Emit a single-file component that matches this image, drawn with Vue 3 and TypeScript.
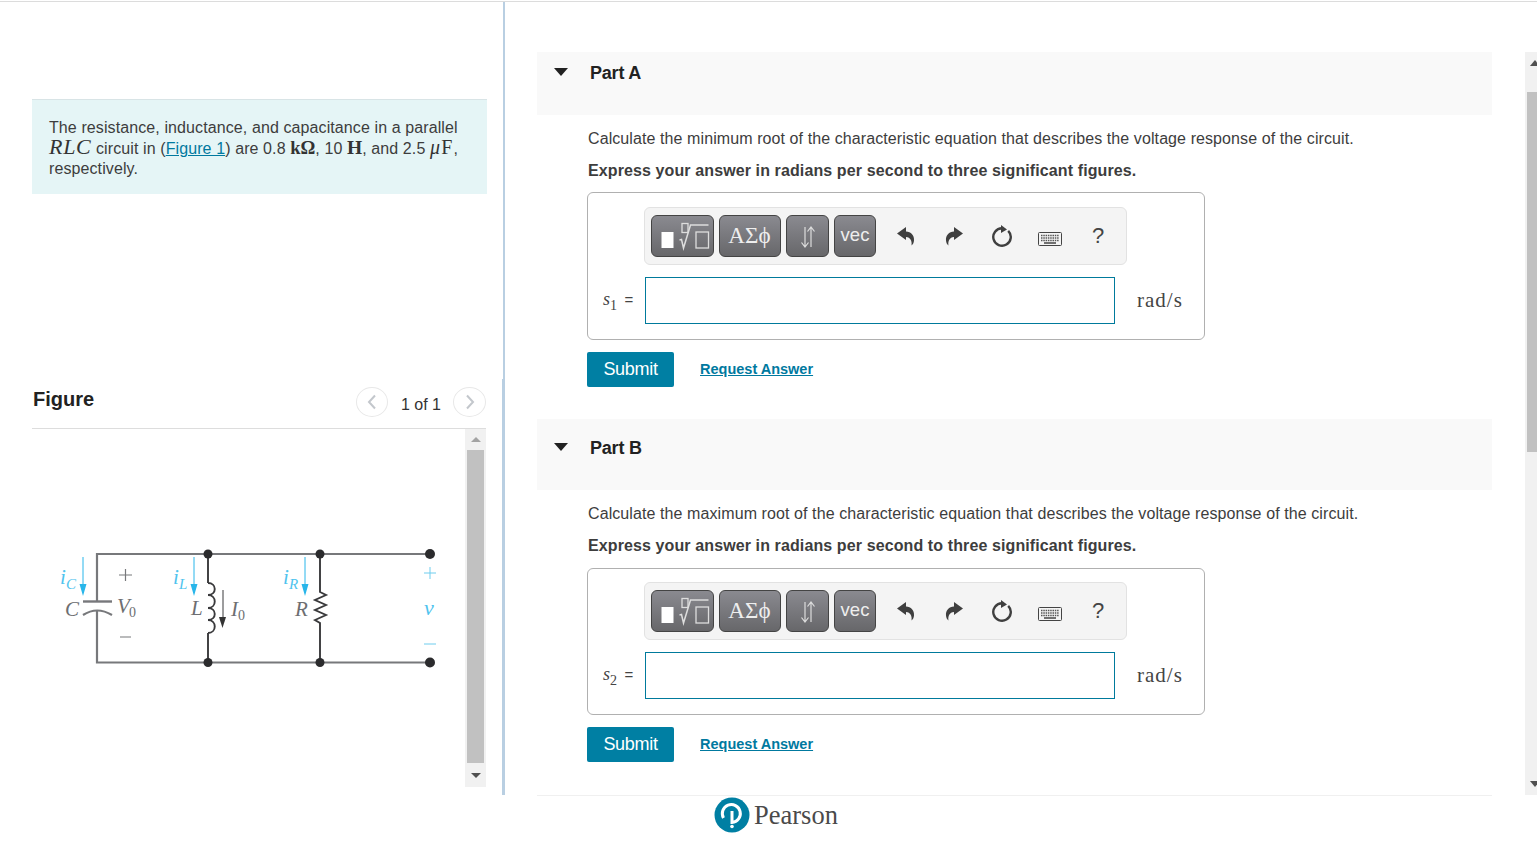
<script setup lang="ts">
interface Part { id: string; title: string; question: string; symbol: string; sub: string; tall: boolean }
const parts: Part[] = [
  { id: 'a', title: 'Part A', question: 'Calculate the minimum root of the characteristic equation that describes the voltage response of the circuit.', symbol: 's', sub: '1', tall: false },
  { id: 'b', title: 'Part B', question: 'Calculate the maximum root of the characteristic equation that describes the voltage response of the circuit.', symbol: 's', sub: '2', tall: true },
]
</script>

<template>
  <div class="page">
    <div class="main">
      <aside class="left">
        <div class="intro">
          The resistance, inductance, and capacitance in a parallel<br>
          <i class="m mi">RLC</i> circuit in (<a class="link" href="#">Figure 1</a>) are 0.8 <b class="m mk">kΩ</b>, 10 <b class="m mh">H</b>, and 2.5 <span class="m mu"><i>μ</i>F</span>,<br>
          respectively.
        </div>
        <div class="fig-head">
          <h2>Figure</h2>
          <div class="pager">
            <span class="round"><svg width="10" height="16" viewBox="0 0 10 16"><path d="M8 1.500 2 8l6 6.500" fill="none" stroke="#c3c7cc" stroke-width="2"/></svg></span>
            <span class="count">1 of 1</span>
            <span class="round"><svg width="10" height="16" viewBox="0 0 10 16"><path d="M2 1.500 8 8l-6 6.500" fill="none" stroke="#c3c7cc" stroke-width="2"/></svg></span>
          </div>
        </div>
        <div class="fig-body">
          <svg class="circuit" width="433" height="358" viewBox="32 429 433 358">
            <g fill="none" stroke="#77787b" stroke-width="2.200">
              <path d="M208 554H97V601M97 611V662.500H208"/>
              <path d="M208 554H430M208 662.500H430" />
              <path d="M83 601.500H112" stroke-width="2.400"/>
              <path d="M83 615Q97 606 112 615" />
              <path d="M119 575H132M125.500 569V581M120 637H131" stroke-width="1.200"/>
            </g>
            <g fill="none" stroke="#3a3a3c" stroke-width="1.900">
              <path d="M208 554V583M208 633V662"/>
              <path d="M208 583c9 0 9 12 0 12c9 0 9 13 0 13c9 0 9 12 0 12c9 0 9 13 0 13" />
              <path d="M320 554V592L326 595 315 600 326 605 315 610 326 615 315 620 320 623V662"/>
              <path d="M223 590V618" stroke-width="1"/>
            </g>
            <path d="M219 617h7l-3.500 11z" fill="#333"/>
            <g fill="#2b2b2d">
              <circle cx="208" cy="554" r="4.500"/><circle cx="320" cy="554" r="4.500"/><circle cx="430" cy="554" r="5"/>
              <circle cx="208" cy="662.500" r="4.500"/><circle cx="320" cy="662.500" r="4.500"/><circle cx="430" cy="662.500" r="5"/>
            </g>
            <g stroke="#29b6ea" fill="none" stroke-width="1">
              <path d="M83 557V585M194 557V585M305 557V585"/>
              <path d="M424 573H436M430 567V579M424 644H436" stroke="#6fcdee"/>
            </g>
            <g fill="#29b6ea">
              <path d="M79.500 584h7l-3.500 12zM190.500 584h7l-3.500 12zM301.500 584h7l-3.500 12z"/>
            </g>
            <g class="svg-t" fill="#6d6e71" font-style="italic">
              <text x="65" y="616" font-size="21">C</text>
              <text x="117" y="613" font-size="21">V</text><text x="129" y="617" font-size="14" font-style="normal">0</text>
              <text x="191" y="615" font-size="21">L</text>
              <text x="231" y="616" font-size="21">I</text><text x="238" y="620" font-size="14" font-style="normal">0</text>
              <text x="295" y="616" font-size="21">R</text>
            </g>
            <g class="svg-t" fill="#4fc3ee" font-style="italic">
              <text x="60" y="584" font-size="21">i</text><text x="66" y="589" font-size="15">C</text>
              <text x="173" y="584" font-size="21">i</text><text x="179" y="589" font-size="15">L</text>
              <text x="283" y="584" font-size="21">i</text><text x="289" y="589" font-size="15">R</text>
              <text x="424" y="615" font-size="22">v</text>
            </g>
          </svg>
          <div class="fig-scroll">
            <span class="tri up small"></span>
            <span class="thumb"></span>
            <span class="tri down small"></span>
          </div>
        </div>
      </aside>

      <section class="right">
        <article v-for="p in parts" :key="p.id" class="part">
          <header class="part-head" :class="{ tall: p.tall }">
            <span class="caret"></span>
            <h3>{{ p.title }}</h3>
          </header>
          <div class="part-body">
            <p class="q">{{ p.question }}</p>
            <p class="ins">Express your answer in radians per second to three significant figures.</p>
            <div class="answer" :class="{ lower: p.tall }">
              <div class="toolbar">
                <button class="tb w1" type="button" aria-label="templates">
                  <svg width="58" height="36" viewBox="0 0 58 36">
                    <rect x="7.500" y="14" width="12" height="16" fill="#fff"/>
                    <path d="M25.500 22l2-.5 2 8.500 7-23h18" fill="none" stroke="#ddd" stroke-width="1.500"/>
                    <rect x="28" y="5.500" width="6" height="9" fill="none" stroke="#ddd" stroke-width="1.300"/>
                    <rect x="42" y="14" width="12.500" height="16" fill="none" stroke="#ddd" stroke-width="1.300"/>
                  </svg>
                </button>
                <button class="tb w2 gr" type="button">ΑΣϕ</button>
                <button class="tb w3" type="button" aria-label="arrows">
                  <svg width="20" height="26" viewBox="0 0 20 26" fill="none" stroke="#ddd" stroke-width="1.200">
                    <path d="M7 4V24M3.500 19.500 7 24l3.500-4.500M13 24V4M9.500 8.500 13 4l3.500 4.500"/>
                  </svg>
                </button>
                <button class="tb w4" type="button">vec</button>
                <span class="ic first"><svg width="20" height="20" viewBox="0 0 20 20"><path d="M1 7.500 10 1v4.500c5 0 8.500 4 8 9-.2 2-1 4-2.500 5 .8-4-1-8.500-5.500-8.500V14z" fill="#3f3f3f"/></svg></span>
                <span class="ic"><svg width="20" height="20" viewBox="0 0 20 20"><path d="M19 7.500 10 1v4.500c-5 0-8.500 4-8 9 .2 2 1 4 2.500 5-.8-4 1-8.500 5.500-8.500V14z" fill="#3f3f3f"/></svg></span>
                <span class="ic"><svg width="24" height="24" viewBox="0 0 24 24"><path d="M12 4.250A8.750 8.750 0 1 0 18.200 6.800" fill="none" stroke="#3f3f3f" stroke-width="2.400"/><path d="M11 1l6 4.500L11 9z" fill="#3f3f3f"/></svg></span>
                <span class="ic kb"><svg width="24" height="16" viewBox="0 0 24 16"><rect x=".5" y="1.500" width="23" height="13" rx="1" fill="#f4f4f4" stroke="#444"/><path d="M3 4.500h18M3 7h18M3 9.500h18" stroke="#555" stroke-width="1.500" stroke-dasharray="1.500 .8"/><path d="M6 12h12" stroke="#444" stroke-width="1.500"/></svg></span>
                <span class="ic help">?</span>
              </div>
              <div class="entry">
                <span class="lhs"><i>{{ p.symbol }}</i><sub>{{ p.sub }}</sub> <span class="eq">=</span></span>
                <input class="field" type="text" :aria-label="p.symbol + p.sub">
                <span class="unit">rad/s</span>
              </div>
            </div>
            <div class="actions">
              <button class="submit" type="button">Submit</button>
              <a class="req" href="#">Request Answer</a>
            </div>
          </div>
        </article>
      </section>

      <div class="page-scroll">
        <span class="tri up"></span>
        <span class="thumb2"></span>
        <span class="tri down end"></span>
      </div>
    </div>
    <footer class="foot">
      <svg width="36" height="36" viewBox="0 0 36 36">
        <circle cx="18" cy="18" r="17.500" fill="#007fa3"/>
        <path d="M9.500 21A9 9 0 1 1 18 25.500V14" fill="none" stroke="#fff" stroke-width="3"/>
        <circle cx="18" cy="29.500" r="1.800" fill="#fff"/>
      </svg>
      <span class="brand">Pearson</span>
    </footer>
  </div>
</template>

<style>
html, body { margin: 0; height: 847px; overflow: hidden; background: #fff; }
</style>

<style scoped>
.page { width: 1537px; height: 847px; font-family: "Liberation Sans", Arial, sans-serif; color: #3d3d3d; overflow: hidden; }
.main { display: flex; height: 795px; padding-top: 1px; box-sizing: border-box; background: linear-gradient(#fff 1px, #dcdcdc 1px, #dcdcdc 2px, #fff 2px); }
.main > * { margin-top: 1px; }
.left { position: relative; width: 505px; flex: none; box-sizing: border-box; padding: 97px 17px 0 32px; border-right: 2px solid #b9cfe2; }
.left::after { content: ""; position: absolute; right: -2px; top: 377px; bottom: 0; width: 3px; background: #b9cfe2; }
.intro { width: 455px; height: 95px; box-sizing: border-box; padding: 18px 0 0 17px; background: #e5f5f6; border-top: 1px solid #d8e4e6; font-size: 16px; line-height: 20.5px; letter-spacing: .1px; }
.m { font-family: "Liberation Serif", serif; font-size: 20px; color: #333; line-height: 0; }
.mi { font-size: 22px; letter-spacing: .7px; }
.mk { font-size: 18.500px; letter-spacing: 0; }
.mh { font-size: 19.500px; }
.mu { letter-spacing: 1.200px; }
.link { color: #00799f; text-decoration: underline; }
.fig-head { display: flex; justify-content: space-between; align-items: flex-start; box-sizing: border-box; border-bottom: 1px solid #ddd; padding: 192px 0 0; height: 235px; }
.fig-head h2 { margin: 0 0 0 1px; font-size: 20px; line-height: 26px; font-weight: 700; color: #222; }
.pager { display: flex; align-items: center; gap: 12px; padding-top: 1px; font-size: 16px; color: #333; }
.count { margin: 6px 0 0 1px; }
.round { width: 32px; height: 30px; border: 1.500px solid #e8e8e8; border-radius: 50%; display: flex; align-items: center; justify-content: center; box-sizing: border-box; }
.round:last-child { width: 33px; }
.fig-body { display: flex; height: 358px; }
.circuit { flex: none; display: block; }
.svg-t { font-family: "Liberation Serif", serif; }
.fig-scroll { width: 21px; background: #f1f1f1; display: flex; flex-direction: column; align-items: center; box-sizing: border-box; padding: 0 2px; }
.thumb { width: 17px; height: 313px; background: #c1c1c1; margin: 8px 0 9px; }
.tri { width: 0; height: 0; border-left: 5px solid transparent; border-right: 5px solid transparent; display: block; }
.tri.up { border-bottom: 6px solid #505050; }
.tri.down { border-top: 6px solid #505050; }
.tri.small.up { margin-top: 8px; border-bottom-width: 5px; border-bottom-color: #a3a3a3; }
.tri.small.down { margin-top: 1px; border-top-width: 5px; }
.right { width: 955px; flex: none; margin-left: 32px; padding-top: 50px; box-sizing: border-box; }
.part-head { display: flex; align-items: center; height: 63px; background: #f9f9f9; padding: 0 0 21px 17px; box-sizing: border-box; }
.part-head.tall { height: 71px; padding-bottom: 13px; }
.caret { width: 0; height: 0; margin-top: -2px; border-left: 7px solid transparent; border-right: 7px solid transparent; border-top: 8px solid #222; }
.part-head h3 { margin: 0 0 0 22px; font-size: 18px; font-weight: 700; color: #222; letter-spacing: -.2px; }
.part-body { padding: 14px 0 32px 50px; }
.q { margin: 0; padding-left: 1px; font-size: 16px; line-height: 20px; letter-spacing: .09px; }
.ins { margin: 12px 0 0; padding-left: 1px; font-size: 16px; line-height: 20px; font-weight: 700; letter-spacing: .11px; }
.answer { width: 618px; height: 148px; margin: 11px 0 0; border: 1px solid #b0b0b0; border-radius: 6px; box-sizing: border-box; padding: 14px 0 0 14px; }
.answer.lower { height: 147px; margin-top: 12px; padding-top: 13px; }
.toolbar { margin-left: 42px; width: 483px; height: 58px; box-sizing: border-box; background: #f4f4f4; border: 1px solid #e2e2e2; border-radius: 6px; display: flex; align-items: center; padding: 0 0 0 6px; gap: 5px; }
.tb { height: 42px; padding: 0 0 2px; border: 1px solid #444; border-radius: 6px; background: linear-gradient(#8a8a90, #67676a); color: #eee; display: flex; align-items: center; justify-content: center; font-family: "Liberation Sans", sans-serif; font-size: 18.500px; box-sizing: border-box; }
.w1 { width: 63px; padding: 0; } .w2 { width: 62px; padding: 0 1px 0 0; } .w3 { width: 43px; padding: 0; } .w4 { width: 42px; }
.gr { font-family: "Liberation Serif", serif; font-size: 23px; letter-spacing: .2px; }
.ic { width: 48px; margin-right: -5px; display: flex; justify-content: center; align-items: center; color: #444; }
.ic.first { margin-left: 1px; }
.ic.kb { padding-top: 5px; }
.help { font-size: 22px; }
.entry { display: flex; align-items: center; margin-top: 12px; }
.lhs { width: 42px; margin: -3px 0 0 1px; font-family: "Liberation Serif", serif; font-size: 18px; line-height: 1; color: #444; white-space: nowrap; }
.lhs sub { font-size: 14px; line-height: 0; }
.eq { font-family: "Liberation Sans", sans-serif; font-size: 15px; margin-left: 3px; }
.field { width: 470px; height: 47px; box-sizing: border-box; border: 1px solid #007a9c; background: #fff; padding: 0; outline: none; border-radius: 0; }
.unit { margin: 0 0 0 22px; font-family: "Liberation Serif", serif; font-size: 21px; letter-spacing: 1px; color: #444; }
.actions { display: flex; align-items: center; margin-top: 12px; }
.submit { width: 87px; height: 35px; border: 0; border-radius: 2px; background: #007fa3; color: #fff; font: 18px "Liberation Sans", sans-serif; letter-spacing: -.3px; padding: 0; }
.req { margin: -2px 0 0 26px; color: #00799f; font-size: 14.500px; font-weight: 700; text-decoration: underline; }
.page-scroll { margin-left: 33px; width: 12px; flex: none; margin-top: 51px !important; background: #f1f1f1; box-sizing: border-box; padding-left: 2px; display: flex; flex-direction: column; }
.page-scroll .tri { margin: 8px 0 0 3px; }
.thumb2 { width: 10px; height: 360px; background: #c1c1c1; margin-top: 26px; }
.page-scroll .tri.end { margin-top: auto; margin-bottom: 8px; }
.foot { margin-left: 537px; width: 955px; border-top: 1px solid #f0f0f0; box-sizing: border-box; padding: 1px 0 0 177px; display: flex; align-items: center; gap: 4px; }
.brand { font-family: "Liberation Serif", serif; font-size: 26.500px; color: #4a4a4a; }
</style>
